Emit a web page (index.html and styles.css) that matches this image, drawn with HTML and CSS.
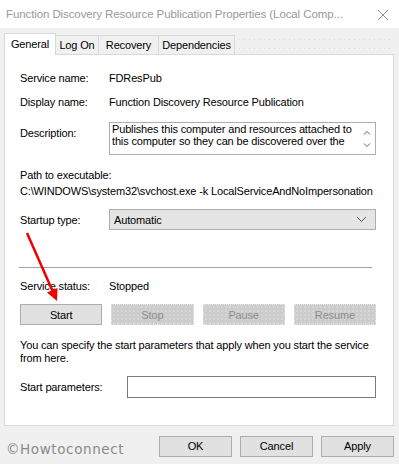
FILE: index.html
```html
<!DOCTYPE html>
<html lang="en">
<head>
    <meta charset="UTF-8">
    <title>Function Discovery Resource Publication Properties</title>
    <link rel="stylesheet" href="styles.css">
</head>
<body>
    <div class="window">
        <div class="titlebar">
            <span class="title">Function Discovery Resource Publication Properties (Local Comp...</span>
            <svg class="close" width="12" height="12" viewBox="0 0 12 12">
                <path d="M1 1 L11 11 M11 1 L1 11" stroke="#8f8f8f" stroke-width="1" fill="none"/>
            </svg>
        </div>

        <div class="tabs">
            <div class="tab active tab-general">General</div>
            <div class="tab tab-logon">Log On</div>
            <div class="tab tab-recovery">Recovery</div>
            <div class="tab tab-deps">Dependencies</div>
            <div class="tab-fill"></div>
        </div>

        <div class="panel">
            <div class="row first">
                <span class="label">Service name:</span>
                <span>FDResPub</span>
            </div>
            <div class="row spaced">
                <span class="label">Display name:</span>
                <span>Function Discovery Resource Publication</span>
            </div>
            <div class="row desc-row">
                <span class="label desc-label">Description:</span>
                <div class="desc-box">
                    <div class="desc-text">Publishes this computer and resources attached to this computer so they can be discovered over the</div>
                    <div class="scroll">
                        <svg width="8" height="5" viewBox="0 0 8 5"><path d="M1 4.5 L4 1.5 L7 4.5" stroke="#606060" fill="none"/></svg>
                        <svg width="8" height="5" viewBox="0 0 8 5"><path d="M1 0.5 L4 3.5 L7 0.5" stroke="#606060" fill="none"/></svg>
                    </div>
                </div>
            </div>
            <div class="path">
                <div>Path to executable:</div>
                <div>C:\WINDOWS\system32\svchost.exe -k LocalServiceAndNoImpersonation</div>
            </div>
            <div class="row startup">
                <span class="label">Startup type:</span>
                <div class="combo">
                    <span>Automatic</span>
                    <svg width="11" height="7" viewBox="0 0 11 7"><path d="M1 1 L5.5 5.5 L10 1" stroke="#555" fill="none"/></svg>
                </div>
            </div>

            <div class="separator"></div>

            <div class="row status">
                <span class="label">Service status:</span>
                <span>Stopped</span>
            </div>
            <div class="actions">
                <button class="btn">Start</button>
                <button class="btn disabled">Stop</button>
                <button class="btn disabled">Pause</button>
                <button class="btn disabled">Resume</button>
            </div>
            <p class="hint">You can specify the start parameters that apply when you start the service from here.</p>
            <div class="row params">
                <span class="label wide">Start parameters:</span>
                <div class="input"></div>
            </div>
        </div>

        <div class="footer">
            <span class="watermark">©Howtoconnect</span>
            <div class="footer-buttons">
                <button class="btn dialog">OK</button>
                <button class="btn dialog">Cancel</button>
                <button class="btn dialog">Apply</button>
            </div>
        </div>

        <svg class="arrow" width="399" height="464" viewBox="0 0 399 464">
            <line x1="27" y1="233" x2="53" y2="292" stroke="#f00000" stroke-width="2.5"/>
            <polygon points="57,301 57.5,288 47,292.5" fill="#f00000"/>
        </svg>
    </div>
</body>
</html>
```

FILE: styles.css
```css
* {
    margin: 0;
    padding: 0;
    box-sizing: border-box;
}

body {
    font-family: 'Liberation Sans', Arial, sans-serif;
    font-size: 11px;
    letter-spacing: -0.15px;
    color: #000;
    background: #f0f0f0;
}

.window {
    position: relative;
    width: 399px;
    height: 464px;
    overflow: hidden;
    background: #f0f0f0;
}

.titlebar {
    height: 28px;
    background: #fff;
    display: flex;
    align-items: center;
    justify-content: space-between;
    padding: 0 10px 0 6px;
}

.title {
    font-size: 11.5px;
    letter-spacing: -0.1px;
    color: #999;
    white-space: nowrap;
}

.close {
    margin-top: 1px;
}

/* tab strip */
.tabs {
    display: flex;
    align-items: flex-end;
    height: 27px;
    padding: 0 5px 0 4px;
    position: relative;
    z-index: 1;
    margin-bottom: -1px;
}

.tab {
    height: 19px;
    line-height: 18px;
    text-align: center;
    border: 1px solid #d9d9d9;
    border-bottom: none;
    border-left: none;
    background: #f0f0f0;
    margin-bottom: 1px;
    flex: none;
}

.tab-general { width: 52px; }
.tab-logon { width: 44px; }
.tab-recovery { width: 60px; }
.tab-deps { width: 76px; }

.tab.active {
    height: 22px;
    line-height: 20px;
    border-left: 1px solid #d9d9d9;
    background: #fff;
    margin-bottom: 0;
    margin-right: -1px;
    position: relative;
    z-index: 2;
}

.tab.active + .tab {
    border-left: 1px solid #d9d9d9;
}

.tab-fill {
    flex: 1;
    height: 19px;
    margin: 0 0 1px 2px;
    background-image: radial-gradient(circle, #dcdcdc 0.6px, transparent 0.9px);
    background-size: 5px 9px;
}

/* main panel */
.panel {
    margin: 0 5px 0 4px;
    height: 372px;
    background: #fff;
    border: 1px solid #d9d9d9;
    padding: 16px 17px 0 15px;
}

.row {
    display: flex;
    align-items: center;
    line-height: 14px;
    white-space: nowrap;
}

.label {
    width: 89px;
    flex: none;
}

.label.wide {
    width: 107px;
}

.spaced {
    margin-top: 10px;
}

.desc-row {
    margin-top: 13px;
    align-items: flex-start;
}

.desc-label {
    margin-top: 4px;
}

.desc-box {
    flex: 1;
    height: 33px;
    border: 1px solid #adadad;
    display: flex;
}

.desc-text {
    flex: 1;
    white-space: normal;
    line-height: 11.5px;
    padding: 1px 0 0 2px;
}

.scroll {
    width: 17px;
    display: flex;
    flex-direction: column;
    align-items: center;
    gap: 8px;
    padding-top: 7px;
}

.path {
    margin-top: 12px;
    line-height: 16px;
    white-space: nowrap;
}

.startup {
    margin-top: 10px;
}

.combo {
    flex: 1;
    height: 21px;
    background: #e5e5e5;
    border: 1px solid #adadad;
    display: flex;
    align-items: center;
    justify-content: space-between;
    padding: 0 8px 0 4px;
}

.separator {
    height: 1px;
    background: #a0a0a0;
    margin: 37px 4px 0 -1px;
}

.status {
    margin-top: 11px;
}

.actions {
    display: flex;
    gap: 9px;
    margin-top: 11px;
}

.btn {
    font-family: inherit;
    font-size: 11px;
    letter-spacing: -0.15px;
    height: 21px;
    background: #e1e1e1;
    border: 1px solid #adadad;
    color: #000;
}

.actions .btn {
    flex: 1;
}

.btn.disabled {
    color: #8d8d8d;
    background-color: #cccccc;
    background-image: radial-gradient(circle, #dadada 0.6px, transparent 0.9px);
    background-size: 4px 4px;
    border: 1px dotted #e8e8e8;
}

.hint {
    margin-top: 14px;
    line-height: 13px;
}

.params {
    margin-top: 11px;
}

.input {
    flex: 1;
    height: 22px;
    border: 1px solid #7a7a7a;
    background: #fff;
}

/* bottom buttons */
.footer {
    display: flex;
    justify-content: space-between;
    align-items: center;
    padding: 9px 5px 0 6px;
}

.watermark {
    font-family: 'DejaVu Sans', sans-serif;
    font-size: 13.5px;
    color: #8a8a8a;
    letter-spacing: 0.6px;
    margin-top: 6px;
}

.footer-buttons {
    display: flex;
    gap: 8px;
}

.btn.dialog {
    width: 73px;
}

.arrow {
    position: absolute;
    left: 0;
    top: 0;
    pointer-events: none;
}
```
